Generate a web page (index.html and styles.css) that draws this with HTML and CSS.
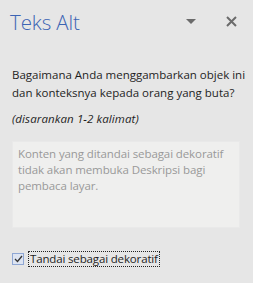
FILE: index.html
```html
<!DOCTYPE html>
<html>
<head>
<meta charset="utf-8">
<link rel="stylesheet" href="styles.css">
</head>
<body>
<div class="pane">
  <div class="header">
    <h1 class="title">Teks Alt</h1>
    <div class="tools">
      <svg class="caret" width="10" height="5" viewBox="0 0 10 5"><path d="M0 0h10L5 5z" fill="#6b6b6b"/></svg>
      <svg class="close" width="11" height="11" viewBox="0 0 11 11"><path d="M1 1l9 9M10 1l-9 9" stroke="#6b6b6b" stroke-width="2"/></svg>
    </div>
  </div>
  <p class="question">Bagaimana Anda menggambarkan objek ini<br>dan konteksnya kepada orang yang buta?</p>
  <p class="hint">(disarankan 1-2 kalimat)</p>
  <div class="textarea">Konten yang ditandai sebagai dekoratif<br>tidak akan membuka Deskripsi bagi<br>pembaca layar.</div>
  <div class="check">
    <span class="box"><svg width="9" height="8" viewBox="0 0 9 8"><path d="M1 4l2.5 2.5L8 1" fill="none" stroke="#333" stroke-width="1.3"/></svg></span>
    <span class="label">Tandai sebagai dekoratif</span>
  </div>
</div>
</body>
</html>
```
FILE: styles.css
```css
html, body { margin: 0; padding: 0; }
body {
  background: #e6e6e6;
  width: 253px;
  height: 283px;
  overflow: hidden;
  font-family: "Open Sans", sans-serif;
}
.pane { padding: 0 13px 0 12px; }
.header {
  display: flex;
  align-items: center;
  justify-content: space-between;
  height: 44px;
  margin-left: -2px;
}
.title {
  margin: 0;
  font-weight: 300;
  font-size: 20.5px;
  color: #3c64b4;
  letter-spacing: -0.1px;
}
.tools { display: flex; align-items: center; gap: 30px; margin-right: 3px; margin-top: -2px; }
.question {
  margin: 22px 0 0;
  font-size: 11.5px;
  line-height: 18px;
  color: #1e1e1e;
  letter-spacing: 0;
  white-space: nowrap;
}
.hint {
  margin: 8px 0 0;
  font-size: 11.5px;
  font-style: italic;
  line-height: 18px;
  color: #1e1e1e;
  letter-spacing: 0.1px;
}
.textarea {
  margin-top: 13px;
  height: 77px;
  background: #efefee;
  border: 1px solid #e9e9e9;
  padding: 4px 5px;
  font-size: 11.5px;
  line-height: 16px;
  color: #999;
  letter-spacing: -0.1px;
  white-space: nowrap;
}
.check {
  display: flex;
  align-items: center;
  margin-top: 23px;
  gap: 4px;
}
.box {
  width: 10px; height: 10px;
  border: 1px solid #8fa7d4;
  background: #dde4f1;
  display: flex; align-items: center; justify-content: center;
}
.label {
  font-size: 11.5px;
  line-height: 14px;
  color: #1e1e1e;
  border: 1px dotted #222;
  padding: 0 1px;
  letter-spacing: -0.15px;
}
```
